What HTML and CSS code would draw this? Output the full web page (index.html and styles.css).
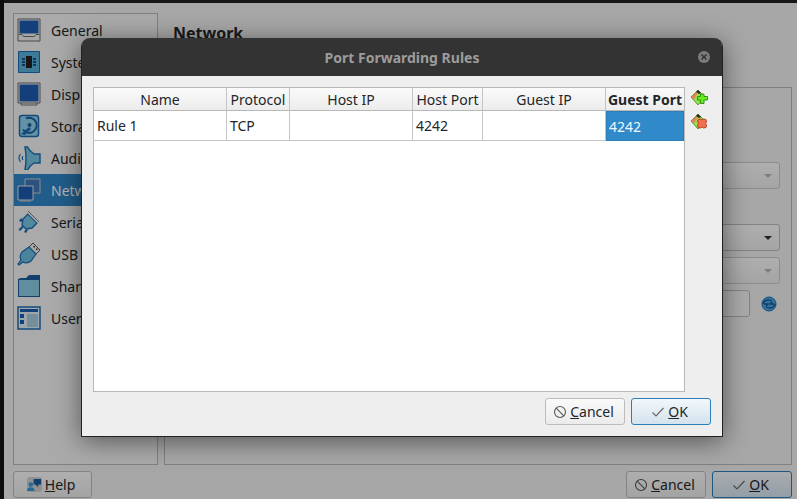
FILE: index.html
```html
<!DOCTYPE html>
<html lang="en">
<head>
    <meta charset="UTF-8">
    <title>Port Forwarding Rules</title>
    <link rel="stylesheet" href="styles.css">
</head>
<body>
    <div class="app">
        <div class="app-top">
            <ul class="sidebar">
                <li class="nav-item">
                    <svg class="nav-icon" viewBox="0 0 24 24"><path d="M1 1h22v22H1z" fill="#f0f0f0" stroke="#6a6a6a"/><path d="M2.500 2.500h19v13h-19z" fill="#1c5bb0"/><path d="M1.500 16.500h3.500l1.500 2h11l1.500-2h3.500" fill="none" stroke="#6a6a6a"/></svg>
                    General
                </li>
                <li class="nav-item">
                    <svg class="nav-icon" viewBox="0 0 24 24"><path d="M1.500 1.500h21v21h-21z" fill="#5ab0d8" stroke="#1c6cb0"/><path d="M9 6h6v12H9z" fill="#222"/><path d="M5 8h3v2H5zM5 11h3v2H5zM5 14h3v2H5zM16 8h3v2h-3zM16 11h3v2h-3zM16 14h3v2h-3z" fill="#1c4c80"/></svg>
                    System
                </li>
                <li class="nav-item">
                    <svg class="nav-icon" viewBox="0 0 24 24"><path d="M1 1h22v20H1z" fill="#f0f0f0" stroke="#6a6a6a"/><path d="M2.500 2.500h19v17h-19z" fill="#1c5bb0"/><path d="M4 21v2h16v-2" fill="none" stroke="#6a6a6a"/></svg>
                    Display
                </li>
                <li class="nav-item">
                    <svg class="nav-icon" viewBox="0 0 24 24"><rect x="2.500" y="1.500" width="19" height="21" rx="2.500" fill="#8ed0ec" stroke="#1c6cb0" stroke-width="1.500"/><path d="M9 4.500a7.500 7.500 0 1 1-3 11" fill="none" stroke="#1c5b9c" stroke-width="1.800"/><circle cx="12.500" cy="11" r="2" fill="#1c5b9c"/><path d="M4 20l8-7 2 2-6 6z" fill="#1c6cb0"/></svg>
                    Storage
                </li>
                <li class="nav-item">
                    <svg class="nav-icon" viewBox="0 0 24 24"><path d="M8 1h2.500q2 4 6.500 7h6v9h-6q-4.500 3-6.500 7H8q2-11 0-23z" fill="#78c4e4" stroke="#1c6cb0" stroke-width="1.400"/><path d="M3.500 8q-3 4 0 8M6 10q-1.500 2 0 4" fill="none" stroke="#1c6cb0" stroke-width="1.200"/></svg>
                    Audio
                </li>
                <li class="nav-item selected">
                    <svg class="nav-icon" viewBox="0 0 24 24"><path d="M8 1h15v14H8z" fill="#3f78b8" stroke="#c8c8c8"/><path d="M1 8h15v14H1z" fill="#1c5bb0" stroke="#e0e0e0"/><path d="M3 23h11" stroke="#c8c8c8"/></svg>
                    Network
                </li>
                <li class="nav-item">
                    <svg class="nav-icon" viewBox="0 0 24 24"><path d="M11 4l9 9-5 5-6 1-4-4 1-6z" fill="#78c4e4" stroke="#1c6cb0" stroke-width="1.400"/><path d="M11 1.500l11 11" stroke="#f0f0f0" stroke-width="3"/><path d="M11 1l11 11" stroke="#666" stroke-width="0.800"/><path d="M5 16l-3.500 3.500 1.500 1.500 3.500-3.500zM9 19l-2 3 2 1 2-3zM4 8l-2 3 2 1 2-2z" fill="#1c6cb0"/></svg>
                    Serial Ports
                </li>
                <li class="nav-item">
                    <svg class="nav-icon" viewBox="0 0 24 24"><path d="M16 1l7 7-4 4-7-7z" fill="#f0f0f0" stroke="#555"/><path d="M16.500 4h1.500v1.500h-1.500zM19 6.500h1.500V8H19z" fill="#333"/><path d="M12 5l7 7-5 7q-4 3-8 1l-4 3-1-1 3-4q-2-4 1-8z" fill="#6abce0" stroke="#1c6cb0" stroke-width="1.200"/></svg>
                    USB
                </li>
                <li class="nav-item">
                    <svg class="nav-icon" viewBox="0 0 24 24"><path d="M1 5l3-1h5l3-3h11v22H1z" fill="#1c5b9c"/><path d="M2 6h20v16H2z" fill="#8ccce4"/></svg>
                    Shared Folders
                </li>
                <li class="nav-item">
                    <svg class="nav-icon" viewBox="0 0 24 24"><path d="M1 1h22v22H1z" fill="#e4eef4" stroke="#1c6cb0" stroke-width="1.500"/><path d="M3 3h18v3H3z" fill="#1c5bb0"/><path d="M3 8h4v4H3zM3 14h4v4H3z" fill="#1c5bb0"/><path d="M10 8h11v13H10z" fill="#a8cce0"/></svg>
                    User Interface
                </li>
            </ul>
            <div class="main">
                <h2 class="main-title">Network</h2>
                <div class="frame">
                    <div class="combo disabled"><span class="combo-arrow"></span></div>
                    <div class="combo"><span class="combo-arrow"></span></div>
                    <div class="combo disabled"><span class="combo-arrow"></span></div>
                    <div class="mac-row">
                        <div class="mac-input"></div>
                        <svg class="refresh" viewBox="0 0 16 16"><circle cx="8" cy="8" r="7" fill="#4aa8e0" stroke="#1c6cb0"/><path d="M2 8q1-4 6-4l3 1M14 8q-1 4-6 4l-3-1M11 5.500L9 8h4M5 10.500L7 8H3" fill="none" stroke="#1c5b9c" stroke-width="1.300"/></svg>
                    </div>
                </div>
            </div>
        </div>
        <div class="app-buttons">
            <button class="btn help-btn">
                <svg class="help-icon" viewBox="0 0 16 16"><rect width="16" height="16" rx="3" fill="#d0d0d0"/><path d="M7 2h8v6h-3v3l-3-3H7z" fill="#1c5b9c"/><circle cx="4" cy="8" r="2.500" fill="#3a9ad8"/><path d="M0 15q0-4 4-4t4 4z" fill="#3a9ad8"/></svg>
                <span><u>H</u>elp</span>
            </button>
            <div class="btn-group">
                <button class="btn">
                    <svg class="btn-icon" viewBox="0 0 14 14"><circle cx="7" cy="7" r="5.500" fill="none" stroke="#555" stroke-width="1.100"/><path d="M3.200 3.200l7.600 7.600" stroke="#555" stroke-width="1.100"/></svg>
                    <span><u>C</u>ancel</span>
                </button>
                <button class="btn btn-default">
                    <svg class="btn-icon" viewBox="0 0 14 14"><path d="M1.500 7.500l3.500 3.500 7.500-8" fill="none" stroke="#666" stroke-width="1.100"/></svg>
                    <span><u>O</u>K</span>
                </button>
            </div>
        </div>
    </div>

    <div class="dim"></div>

    <div class="modal">
        <div class="modal-title">
            <span>Port Forwarding Rules</span>
            <span class="modal-close">
                <svg viewBox="0 0 12 12"><circle cx="6" cy="6" r="6" fill="#7b7b7b"/><path d="M3.500 3.500l5 5M8.500 3.500l-5 5" stroke="#2c2c2c" stroke-width="1.400"/></svg>
            </span>
        </div>
        <div class="modal-body">
            <div class="rules">
                <div class="rules-table">
                    <table>
                        <thead>
                            <tr>
                                <th class="col-name">Name</th>
                                <th class="col-proto">Protocol</th>
                                <th class="col-ip">Host IP</th>
                                <th class="col-port">Host Port</th>
                                <th class="col-ip">Guest IP</th>
                                <th class="col-last active">Guest Port</th>
                            </tr>
                        </thead>
                        <tbody>
                            <tr>
                                <td>Rule 1</td>
                                <td>TCP</td>
                                <td></td>
                                <td>4242</td>
                                <td></td>
                                <td class="cell-selected">4242</td>
                            </tr>
                        </tbody>
                    </table>
                </div>
                <div class="rule-tools">
                    <svg class="tool-icon" viewBox="0 0 18 18"><path d="M1 8l7-7 7 7-7 8z" fill="#96e050" stroke="#3c8c10" stroke-width="0.800"/><path d="M1.500 8l4.500-5 1.500 1.500-3.500 6z" fill="#e8805c"/><path d="M6 3l2-2 3 3-2 1z" fill="#2a2a2a"/><path d="M7.500 7.500h3V5h3.500v2.500h3.500V11H14v3.500h-3.500V11h-3z" fill="#66ee22" stroke="#2c8a08" stroke-width="0.900"/></svg>
                    <svg class="tool-icon" viewBox="0 0 18 18"><path d="M1 8l7-7 7 7-7 8z" fill="#96e050" stroke="#3c8c10" stroke-width="0.800"/><path d="M1.500 8l4.500-5 1.500 1.500-3.500 6z" fill="#e8805c"/><path d="M6 3l2-2 3 3-2 1z" fill="#2a2a2a"/><path d="M8 6.500l2.500-.5 1.500 1 1.500-1 2.500.5.500 2.500-1 1.500 1 1.500-.5 2.500-2.500.5-1.500-1-1.500 1-2.500-.5-.5-2.500 1-1.500-1-1.500z" fill="#f4704c" stroke="#b83c18" stroke-width="0.900"/></svg>
                </div>
            </div>
            <div class="modal-buttons">
                <button class="btn">
                    <svg class="btn-icon" viewBox="0 0 14 14"><circle cx="7" cy="7" r="5.500" fill="none" stroke="#555" stroke-width="1.100"/><path d="M3.200 3.200l7.600 7.600" stroke="#555" stroke-width="1.100"/></svg>
                    <span><u>C</u>ancel</span>
                </button>
                <button class="btn btn-default">
                    <svg class="btn-icon" viewBox="0 0 14 14"><path d="M1.500 7.500l3.500 3.500 7.500-8" fill="none" stroke="#666" stroke-width="1.100"/></svg>
                    <span><u>O</u>K</span>
                </button>
            </div>
        </div>
    </div>
</body>
</html>
```

FILE: styles.css
```css
html, body {
    height: 100%;
}

body {
    margin: 0;
    background-color: #141414;
    color: #232629;
    font-family: "Noto Sans", sans-serif;
    font-size: 14px;
    overflow: hidden;
}

.app {
    box-sizing: border-box;
    height: 499px;
    margin-left: 4px;
    padding: 10px 5px 1px 9px;
    border-top: 3px solid #202020;
    background-color: #f0f0f0;
    display: flex;
    flex-direction: column;
    gap: 6px;
}

.app-top {
    display: flex;
    gap: 6px;
    height: 452px;
}

.sidebar {
    box-sizing: border-box;
    width: 145px;
    margin: 0;
    padding: 0;
    list-style: none;
    border: 1px solid #b8b8b8;
    background-color: #f4f4f4;
    overflow: hidden;
}

.nav-item {
    display: flex;
    align-items: center;
    gap: 10px;
    height: 32px;
    padding-left: 3px;
    white-space: nowrap;
}

.nav-item.selected {
    background-color: #3086c8;
    color: #fff;
}

.nav-icon {
    width: 24px;
    height: 24px;
    flex: none;
}

.main {
    flex: 1;
    display: flex;
    flex-direction: column;
}

.main-title {
    margin: 9px 0 0 9px;
    height: 65px;
    font-size: 16px;
    font-weight: 700;
    line-height: 22px;
}

.frame {
    box-sizing: border-box;
    flex: 1;
    border: 1px solid #b8b8b8;
    padding: 74px 11px 0 0;
    display: flex;
    flex-direction: column;
    align-items: flex-end;
}

.combo {
    box-sizing: border-box;
    position: relative;
    width: 400px;
    height: 27px;
    margin-bottom: 6px;
    border: 1px solid #bcbcbc;
    border-radius: 3px;
    background: linear-gradient(#fafafa, #ececec);
}

.combo.disabled {
    margin-bottom: 35px;
    border-color: #c8c8c8;
}

.combo + .combo.disabled {
    margin-bottom: 6px;
}

.combo-arrow {
    position: absolute;
    right: 7px;
    top: 11px;
    border-left: 4px solid transparent;
    border-right: 4px solid transparent;
    border-top: 4px solid #333;
}

.combo.disabled .combo-arrow {
    border-top-color: #b4b4b4;
}

.mac-row {
    display: flex;
    align-items: center;
    gap: 10px;
    padding-right: 2px;
}

.mac-input {
    box-sizing: border-box;
    width: 300px;
    height: 27px;
    border: 1px solid #bcbcbc;
    border-radius: 3px;
    background-color: #f4f4f4;
}

.refresh {
    width: 16px;
    height: 16px;
    margin-right: 1px;
    margin-left: 1px;
}

.app-buttons {
    display: flex;
    justify-content: space-between;
}

.btn-group {
    display: flex;
    gap: 6px;
}

.btn {
    box-sizing: border-box;
    width: 80px;
    height: 27px;
    padding: 0 3px 0 0;
    display: flex;
    align-items: center;
    justify-content: center;
    gap: 3px;
    border: 1px solid #bcbcbc;
    border-radius: 3px;
    background: linear-gradient(#fafafa, #ebebeb);
    color: #232629;
    font-family: inherit;
    font-size: 14px;
}

.btn-default {
    border-color: #2b7fb8;
    background: linear-gradient(#f2f7fa, #d4e3ee);
}

.help-btn {
    width: 79px;
}

.btn-icon {
    width: 14px;
    height: 14px;
}

.help-icon {
    width: 15px;
    height: 15px;
}

.dim {
    position: absolute;
    inset: 0;
    background-color: rgba(0, 0, 0, 0.3);
}

.modal {
    box-sizing: border-box;
    position: absolute;
    left: 81px;
    top: 38px;
    width: 642px;
    height: 399px;
    border: 1px solid #222;
    border-top: none;
    border-radius: 9px 9px 0 0;
    background-color: #eeeeee;
    box-shadow: 0 4px 26px rgba(0, 0, 0, 0.5);
    display: flex;
    flex-direction: column;
}

.modal-title {
    position: relative;
    height: 38px;
    flex: none;
    display: flex;
    align-items: center;
    justify-content: center;
    border-radius: 8px 8px 0 0;
    background-color: #333333;
    color: #9c9c9c;
    font-weight: 700;
}

.modal-close {
    position: absolute;
    right: 12px;
    top: 13px;
    width: 12px;
    height: 12px;
}

.modal-close svg {
    display: block;
}

.modal-body {
    flex: 1;
    padding: 11px;
    display: flex;
    flex-direction: column;
    gap: 6px;
}

.rules {
    display: flex;
    gap: 5px;
}

.rules-table {
    box-sizing: border-box;
    width: 592px;
    height: 305px;
    border: 1px solid #b8b8b8;
    background-color: #fff;
}

table {
    width: 590px;
    table-layout: fixed;
    border-collapse: separate;
    border-spacing: 0;
}

th {
    box-sizing: border-box;
    height: 23px;
    padding: 0;
    border-right: 1px solid #c4c4c4;
    border-bottom: 1px solid #b8b8b8;
    background: linear-gradient(#fafafa, #ececec);
    font-weight: 400;
    white-space: nowrap;
    overflow: hidden;
}

th.active {
    font-weight: 700;
}

td {
    box-sizing: border-box;
    height: 30px;
    padding: 0 0 0 3px;
    border-right: 1px solid #c4c4c4;
    border-bottom: 1px solid #c4c4c4;
    font-size: 14px;
}

.col-name { width: 133px; }
.col-proto { width: 63px; }
.col-ip { width: 123px; }
.col-port { width: 70px; }
.col-last { width: 78px; border-right: none; }

td.cell-selected {
    border: 1px solid #2b7fb8;
    padding-left: 2px;
    background-color: #3089c8;
    color: #f0f8ff;
}

.rule-tools {
    display: flex;
    flex-direction: column;
    gap: 6px;
    padding-top: 2px;
}

.tool-icon {
    width: 18px;
    height: 18px;
}

.modal-buttons {
    display: flex;
    justify-content: flex-end;
    gap: 6px;
}
```
